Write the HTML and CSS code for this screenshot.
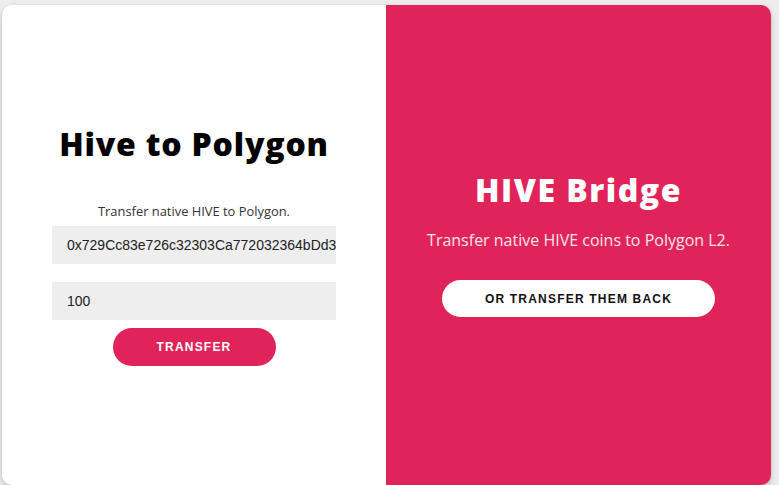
FILE: index.html
```html
<!DOCTYPE html>
<html>
<head>
<meta charset="utf-8">
<link rel="stylesheet" href="styles.css">
</head>
<body>
<div class="card">
  <div class="panel panel-left">
    <h1 class="title title-dark">Hive to Polygon</h1>
    <p class="lead">Transfer native HIVE to Polygon.</p>
    <div class="field">0x729Cc83e726c32303Ca772032364bDd3</div>
    <div class="field">100</div>
    <button class="btn btn-red">TRANSFER</button>
  </div>
  <div class="panel panel-right">
    <h1 class="title title-light">HIVE Bridge</h1>
    <p class="sub">Transfer native HIVE coins to Polygon L2.</p>
    <button class="btn btn-white">OR TRANSFER THEM BACK</button>
  </div>
</div>
</body>
</html>
```
FILE: styles.css
```css
html, body {
  margin: 0;
  padding: 0;
  height: 100%;
  overflow: hidden;
}
body {
  background: #ededed;
  font-family: "Open Sans", "Noto Sans", sans-serif;
  padding: 5px 8px 0 2px;
  box-sizing: border-box;
}
.card {
  display: flex;
  width: 769px;
  height: 480px;
  border-radius: 10px;
  overflow: hidden;
  background: #fff;
  box-shadow: 0 4px 10px rgba(0,0,0,0.12), 0 1px 3px rgba(0,0,0,0.15);
}
.panel {
  display: flex;
  flex-direction: column;
  align-items: center;
  box-sizing: border-box;
}
.panel-left {
  width: 384px;
  background: #fff;
  padding: 117px 50px 0 50px;
}
.panel-right {
  width: 385px;
  background: #e02459;
  padding: 163px 10px 0 10px;
  color: #fff;
}
.title {
  margin: 0;
  font-weight: 800;
  white-space: nowrap;
  line-height: 44px;
}
.title-dark {
  font-size: 32px;
  letter-spacing: 0.8px;
  color: #000;
}
.title-light {
  font-size: 32px;
  letter-spacing: 1.5px;
  color: #fff;
}
.lead {
  margin: 37px 0 7px 0;
  font-size: 12.9px;
  color: #333;
  line-height: 16px;
}
.sub {
  margin: 18px 0 30px 0;
  font-size: 16px;
  line-height: 20px;
  color: #fbe3ea;
}
.field {
  align-self: stretch;
  background: #eee;
  height: 38px;
  line-height: 38px;
  padding: 0 15px;
  font-family: "Liberation Sans", Arial, sans-serif;
  font-size: 14px;
  color: #222;
  white-space: nowrap;
  overflow: hidden;
  margin-bottom: 18px;
}
.field + .field {
  margin-bottom: 8px;
}
.btn {
  border: none;
  border-radius: 20px;
  height: 38px;
  font-family: "Liberation Sans", Arial, sans-serif;
  font-weight: bold;
  font-size: 12px;
  letter-spacing: 1.2px;
  padding: 0;
}
.btn-red {
  width: 163px;
  background: #e02459;
  color: #fff;
}
.btn-white {
  width: 273px;
  height: 37px;
  background: #fff;
  color: #111;
}
```
